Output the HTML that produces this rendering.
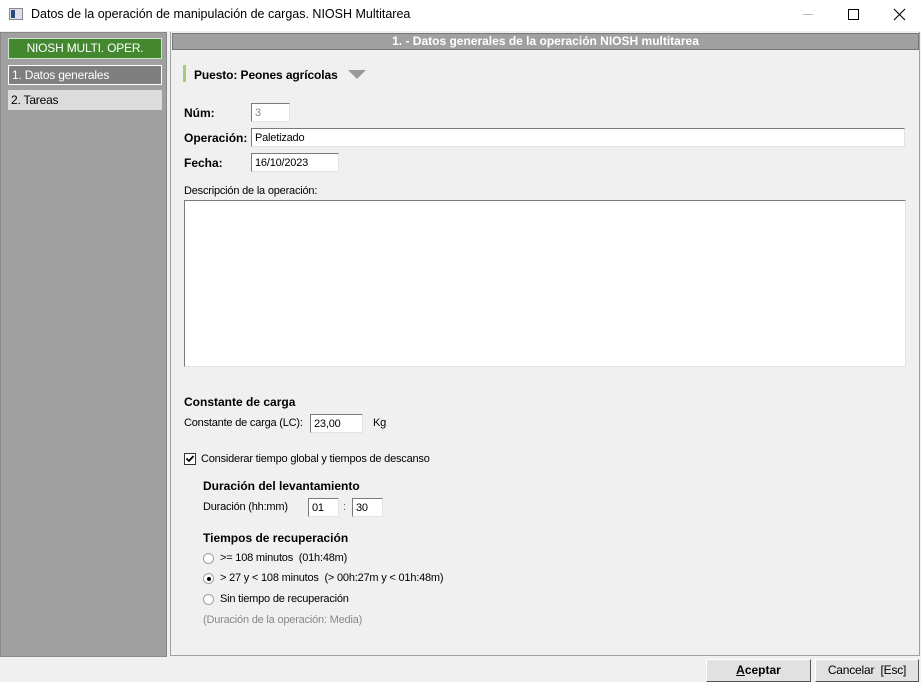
<!DOCTYPE html>
<html><head><meta charset="utf-8"><style>
*{margin:0;padding:0;box-sizing:border-box}
body{width:921px;height:682px;overflow:hidden;background:#f0f0f0;font-family:"Liberation Sans",sans-serif;font-size:11px;letter-spacing:-0.2px;color:#000;position:relative}
.a{position:absolute}
.t{position:absolute;white-space:nowrap}
.b{font-weight:bold;font-size:12px;letter-spacing:0}
.in{position:absolute;background:#fff;border:1px solid #7a7a7a;border-right-color:#e3e3e3;border-bottom-color:#e3e3e3;font-size:11px;padding:2px 3px;line-height:14px}
.rad{position:absolute;width:11px;height:11px;border-radius:50%;background:#fff;border:1px solid #a0a0a0}
</style></head><body>
<div class="a" style="left:0;top:0;width:921px;height:31px;background:#fff"></div>
<div class="a" style="left:9px;top:8px;width:14px;height:12px;border:1px solid #888;background:#dde"></div>
<div class="a" style="left:11px;top:10px;width:4px;height:8px;background:#2a4a7a"></div>
<div class="t" style="left:31px;top:7px;font-size:12.5px;letter-spacing:0">Datos de la operación de manipulación de cargas. NIOSH Multitarea</div>
<div class="a" style="left:803px;top:14px;width:10px;height:1px;background:#bbb"></div>
<div class="a" style="left:848px;top:9px;width:11px;height:11px;border:1px solid #000"></div>
<svg class="a" style="left:893px;top:8px" width="13" height="13"><path d="M1 1L12 12M12 1L1 12" stroke="#000" stroke-width="1.1"/></svg>

<div class="a" style="left:0;top:32px;width:167px;height:625px;background:#a0a0a0;border:1px solid #888"></div>
<div class="a" style="left:8px;top:38px;width:154px;height:21px;background:#43882f;border:1px solid #d0e0cc;color:#fff;text-align:center;line-height:19px;font-size:12px">NIOSH MULTI. OPER.</div>
<div class="a" style="left:8px;top:65px;width:154px;height:20px;background:#7f7f7f;border:1px solid #fff;color:#fff;line-height:18px;padding-left:3px;font-size:12px">1. Datos generales</div>
<div class="a" style="left:8px;top:90px;width:154px;height:20px;background:#dcdcdc;line-height:20px;padding-left:3px;font-size:12px">2. Tareas</div>

<div class="a" style="left:170px;top:32px;width:750px;height:624px;border:1px solid #a0a0a0;border-top:none"></div>
<div class="a" style="left:172px;top:33px;width:747px;height:17px;background:#a0a0a0;border:1px solid #777;color:#fff;font-weight:bold;text-align:center;line-height:15px;font-size:12px;letter-spacing:0">1. - Datos generales de la operación NIOSH multitarea</div>

<div class="a" style="left:183px;top:65px;width:3px;height:17px;background:#9ad27a"></div>
<div class="t b" style="left:194px;top:68px;letter-spacing:-0.1px">Puesto: Peones agrícolas</div>
<svg class="a" style="left:348px;top:70px" width="18" height="10"><path d="M0 0H18L9 9Z" fill="#999"/></svg>

<div class="t b" style="left:184px;top:106px">Núm:</div>
<div class="in" style="left:251px;top:103px;width:39px;height:19px;color:#888">3</div>
<div class="t b" style="left:184px;top:131px">Operación:</div>
<div class="in" style="left:251px;top:128px;width:654px;height:19px">Paletizado</div>
<div class="t b" style="left:184px;top:156px">Fecha:</div>
<div class="in" style="left:251px;top:153px;width:88px;height:19px">16/10/2023</div>
<div class="t" style="left:184px;top:185px">Descripción de la operación:</div>
<div class="in" style="left:184px;top:200px;width:722px;height:167px"></div>

<div class="t b" style="left:184px;top:395px">Constante de carga</div>
<div class="t" style="left:184px;top:417px">Constante de carga (LC):</div>
<div class="in" style="left:310px;top:414px;width:53px;height:19px">23,00</div>
<div class="t" style="left:373px;top:417px">Kg</div>

<div class="a" style="left:184px;top:453px;width:12px;height:12px;border:1px solid #333;background:#fff"></div>
<svg class="a" style="left:185px;top:454px" width="10" height="10"><path d="M1.5 4.5L4 7L8.5 2" stroke="#000" stroke-width="1.8" fill="none"/></svg>
<div class="t" style="left:201px;top:453px">Considerar tiempo global y tiempos de descanso</div>

<div class="t b" style="left:203px;top:479px">Duración del levantamiento</div>
<div class="t" style="left:203px;top:501px">Duración (hh:mm)</div>
<div class="in" style="left:308px;top:498px;width:31px;height:19px">01</div>
<div class="t" style="left:343px;top:501px;color:#666">:</div>
<div class="in" style="left:352px;top:498px;width:31px;height:19px">30</div>

<div class="t b" style="left:203px;top:531px">Tiempos de recuperación</div>
<div class="rad" style="left:203px;top:553px"></div>
<div class="t" style="left:220px;top:552px">&gt;= 108 minutos &nbsp;(01h:48m)</div>
<div class="rad" style="left:203px;top:573px"></div>
<div class="a" style="left:207px;top:577px;width:4px;height:4px;border-radius:50%;background:#000"></div>
<div class="t" style="left:220px;top:572px">&gt; 27 y &lt; 108 minutos &nbsp;(&gt; 00h:27m y &lt; 01h:48m)</div>
<div class="rad" style="left:203px;top:594px"></div>
<div class="t" style="left:220px;top:593px">Sin tiempo de recuperación</div>
<div class="t" style="left:203px;top:614px;color:#888">(Duración de la operación: Media)</div>

<div class="a" style="left:706px;top:659px;width:105px;height:23px;background:#e1e1e1;border:1px solid #fff;border-right-color:#555;border-bottom-color:#555;text-align:center;line-height:21px;font-weight:bold;font-size:12px;letter-spacing:0"><u>A</u>ceptar</div>
<div class="a" style="left:815px;top:659px;width:104px;height:23px;background:#e1e1e1;border:1px solid #fff;border-right-color:#555;border-bottom-color:#555;text-align:center;line-height:21px;font-size:12px">Cancelar &nbsp;[Esc]</div>
</body></html>
